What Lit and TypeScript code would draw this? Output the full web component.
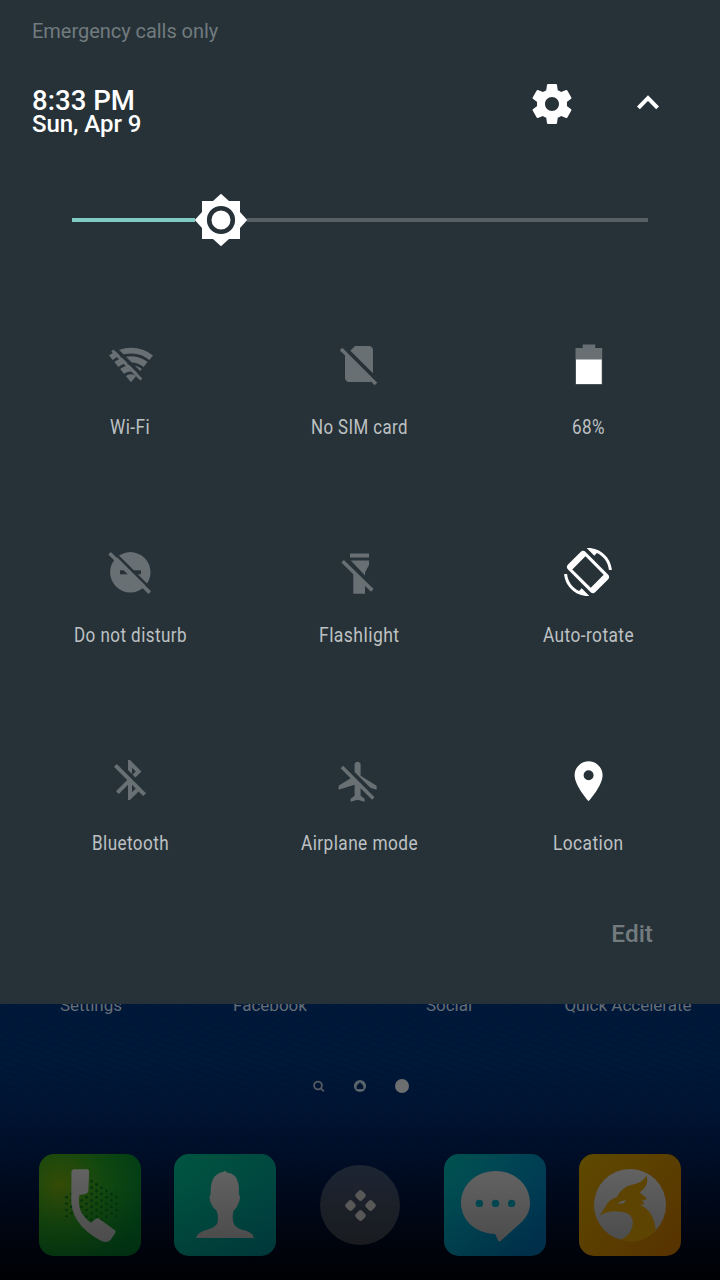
import { LitElement, html, css, svg } from "lit";
import { customElement, property } from "lit/decorators.js";

const icons: Record<string, unknown> = {
  wifi: svg`
    <defs><mask id="wm" maskUnits="userSpaceOnUse" x="0" y="0" width="52" height="48">
      <rect width="52" height="48" fill="#fff"/>
      <g fill="none" stroke="#000" stroke-width="2.8"><circle cx="25" cy="42.3" r="9.5"/><circle cx="25" cy="42.3" r="18.5"/><circle cx="25" cy="42.3" r="27.5"/></g>
      <path d="M6 5.2L40 39.2" stroke="#000" stroke-width="3.6"/>
    </mask></defs>
    <path mask="url(#wm)" d="M25 42.3L3 15.6Q12.5 7.8 25 7.8T47 15.6Z"/>
    <path d="M5.3 11.4L7.3 9.4L36.3 38.4L34.3 40.4Z"/>`,
  sim: svg`<path transform="scale(2)" d="M18.99 5c0-1.1-.89-2-1.99-2h-7L7.66 5.34 19 16.68 18.99 5zM3.65 3.88L2.38 5.15 5 7.77V19c0 1.1.9 2 2 2h10.01c.35 0 .67-.1.96-.26l1.88 1.88 1.27-1.27L3.65 3.88z"/>`,
  battery: svg`<path fill="#697074" d="M11.5 8H18.7V4.4H31.2V8H38.2V44.5H11.5Z"/><path d="M12 19.5H37.7V44H12Z"/>`,
  dnd: svg`
    <defs><mask id="dm" maskUnits="userSpaceOnUse" x="0" y="0" width="48" height="48">
      <rect width="48" height="48" fill="#fff"/><path d="M14 22.3H35V26.3H14Z" fill="#000"/>
      <path d="M4 0.8L48 44.8" stroke="#000" stroke-width="3.2"/>
      <path d="M7 8.3L40 41.3" stroke="#fff" stroke-width="4.6"/>
    </mask></defs>
    <g mask="url(#dm)"><circle cx="24.3" cy="24.3" r="20.2"/></g>
    <path d="M2.3 6.6L4.8 4.1L45 43.3L42.5 46Z"/>`,
  flash: svg`
    <path d="M15 5.6H34V9.4H15ZM15.8 12.6H34V17L30 24.4V27.4ZM18.3 25L30 36.5V45.7H18.3Z"/>
    <path d="M6.4 14.4L8.9 11.9L38.6 41.1L36 43.7Z"/>`,
  rotate: svg`<path transform="scale(2)" d="M16.48 2.52c3.27 1.55 5.61 4.72 5.97 8.48h1.5C23.44 4.84 18.29 0 12 0l-.66.03 3.81 3.81 1.33-1.32zm-8.96 18.96C4.25 19.94 1.91 16.76 1.55 13H.05C.56 19.16 5.71 24 12 24l.66-.03-3.81-3.81-1.33 1.32z"/>
    <path fill-rule="evenodd" d="M21.6 4Q19.1 1.6 16.6 4L4 16.6Q1.6 19.1 4 21.6L26.4 44Q28.9 46.4 31.4 44L44 31.4Q46.4 28.9 44 26.4ZM21.4 8.3L39.7 26.8L26.8 39.7L8.3 21.4Z"/>`,
  bluetooth: svg`<path transform="scale(2)" d="M13 5.83l1.88 1.88-1.6 1.6 1.41 1.41 3.02-3.02L12 2h-1v5.03l2 2v-3.2zM5.41 4L4 5.41 10.59 12 5 17.59 6.41 19 11 14.41V22h1l4.29-4.29 2.3 2.29L20 18.59 5.41 4zM13 18.17v-3.76l1.88 1.88L13 18.17z"/>`,
  airplane: svg`<path transform="translate(-.4 1.7) scale(2)" d="M13 9V3.5c0-.83-.67-1.5-1.5-1.5S10 2.67 10 3.5v3.68l7.83 7.83L21 16v-2l-8-5zM3 5.27l4.99 4.99L2 14v2l8-2.5V19l-2 1.5V22l3.5-1 3.5 1v-1.5L13 19v-3.73L18.73 21 20 19.73 4.27 4 3 5.27z"/>`,
  location: svg`<path fill-rule="evenodd" transform="translate(.6 1.3) scale(2)" d="M12 2C8.13 2 5 5.13 5 9c0 5.25 7 13 7 13s7-7.75 7-13c0-3.87-3.13-7-7-7zm0 9.5a2.5 2.5 0 0 1 0-5 2.5 2.5 0 0 1 0 5z"/>`,
};

@customElement("qs-tile")
class QsTile extends LitElement {
  @property() icon = "";
  @property() label = "";
  @property({ type: Boolean, reflect: true }) on = false;
  @property({ type: Number }) w = 100;

  static styles = css`
    :host { display: flex; flex-direction: column; align-items: center; height: 208px; color: #697074; }
    :host([on]) { color: #fff; }
    .glyph { display: block; width: 48px; height: 48px; margin-right: 1px; overflow: visible; fill: currentColor; }
    .label { display: block; height: 30px; margin: 24px 1px 0 0; overflow: visible; }
    text { font: 400 20px Roboto, sans-serif; letter-spacing: .5px; fill: #bec1c3; }
  `;

  render() {
    return html`
      <svg class="glyph" viewBox="0 0 48 48">${icons[this.icon]}</svg>
      <svg class="label" width=${this.w} height="30"><text x="0" y="22" textLength=${this.w} lengthAdjust="spacingAndGlyphs">${this.label}</text></svg>`;
  }
}

const tiles = [
  { icon: "wifi", label: "Wi-Fi", w: 40, on: false },
  { icon: "sim", label: "No SIM card", w: 97, on: false },
  { icon: "battery", label: "68%", w: 33, on: true },
  { icon: "dnd", label: "Do not disturb", w: 113, on: false },
  { icon: "flash", label: "Flashlight", w: 80.5, on: false },
  { icon: "rotate", label: "Auto-rotate", w: 91, on: true },
  { icon: "bluetooth", label: "Bluetooth", w: 77, on: false },
  { icon: "airplane", label: "Airplane mode", w: 117, on: false },
  { icon: "location", label: "Location", w: 70.5, on: true },
];

@customElement("app-root")
class AppRoot extends LitElement {
  static styles = css`
    :host { display: flex; flex-direction: column; width: 720px; height: 1280px; overflow: hidden; font-family: Roboto, sans-serif; background: #000; }
    svg { display: block; }
    .panel { flex: none; box-sizing: border-box; height: 1004px; background: #263238; position: relative; z-index: 1; color: #fff; }
    .carrier { padding: 19px 32px 0; font-size: 20px; line-height: 24px; letter-spacing: -.04px; color: #727b7e; }
    .header { display: flex; height: 96px; padding: 0 48px 0 32px; margin-top: 13px; }
    .clock { flex: 1; padding-top: 32px; font-weight: 500; white-space: nowrap; }
    .time { font-size: 27.6px; line-height: 25px; }
    .date { font-size: 24px; line-height: 22px; letter-spacing: -.05px; }
    .actions { display: flex; gap: 48px; padding-top: 24px; }
    .actions svg { fill: #fff; }
    .slider { display: flex; align-items: center; height: 54px; margin: 41px 72px 0; }
    .filled { width: 123px; height: 4px; background: #80cbc4; }
    .rest { flex: 1; height: 4px; background: #576064; }
    .tiles { display: grid; grid-template-columns: repeat(3, 229px); padding: 93px 16px 0; }
    .edit { padding: 0 67px; margin-top: -44px; text-align: right; font-size: 24.4px; line-height: 28px; font-weight: 500; color: #737b7f; }
    .home { flex: 1; background: linear-gradient(#001a3c 0, #001a3c00 0) , linear-gradient(transparent 25%, transparent 25%), repeating-linear-gradient(18deg, rgba(0,0,0,.07) 0 2px, transparent 2px 6px), linear-gradient(#00193b 0, #001839 22%, #001434 38%, #000d25 58%, #00040f 85%, #000103 100%); }
    .apps { display: grid; grid-template-columns: repeat(4, 179px); padding-left: 1.5px; margin-top: -9px; font-size: 17px; line-height: 20px; text-align: center; color: #666d74; white-space: nowrap; }
    .pages { display: flex; justify-content: center; margin-top: 63px; }
    .dock { display: grid; grid-template-columns: repeat(5, 135px); justify-content: center; align-items: center; justify-items: center; margin-top: 60px; }
    .app { width: 102px; height: 102px; }
  `;

  render() {
    return html`
      <div class="panel">
        <div class="carrier">Emergency calls only</div>
        <div class="header">
          <div class="clock"><div class="time">8:33 PM</div><div class="date">Sun, Apr 9</div></div>
          <div class="actions">
            <svg width="48" height="48" viewBox="0 0 24 24"><path d="M19.43 12.98c.04-.32.07-.64.07-.98s-.03-.66-.07-.98l2.11-1.65c.19-.15.24-.42.12-.64l-2-3.46c-.12-.22-.39-.3-.61-.22l-2.49 1c-.52-.4-1.08-.73-1.69-.98l-.38-2.65C14.46 2.18 14.25 2 14 2h-4c-.25 0-.46.18-.49.42l-.38 2.65c-.61.25-1.17.59-1.69.98l-2.49-1c-.23-.09-.49 0-.61.22l-2 3.46c-.13.22-.07.49.12.64l2.11 1.65c-.04.32-.07.65-.07.98s.03.66.07.98l-2.11 1.65c-.19.15-.24.42-.12.64l2 3.46c.12.22.39.3.61.22l2.49-1c.52.4 1.08.73 1.69.98l.38 2.65c.03.24.24.42.49.42h4c.25 0 .46-.18.49-.42l.38-2.65c.61-.25 1.17-.59 1.69-.98l2.49 1c.23.09.49 0 .61-.22l2-3.46c.12-.22.07-.49-.12-.64l-2.11-1.65zM12 15.5c-1.93 0-3.5-1.57-3.5-3.5s1.57-3.5 3.5-3.5 3.5 1.57 3.5 3.5-1.57 3.5-3.5 3.5z"/></svg>
            <svg width="48" height="48" viewBox="0 0 48 48"><path d="M14.4 27.8L24 18.2L33.6 27.8" fill="#263238" stroke="#fff" stroke-width="4"/></svg>
          </div>
        </div>
        <div class="slider">
          <div class="filled"></div>
          <svg width="52" height="54" viewBox="-26 -27 52 54"><path fill="#fff" d="M-19 -19H-8L0 -26.3L8 -19H19V-8L26.3 0L19 8V19H8L0 26.3L-8 19H-19V8L-26.3 0L-19 -8Z"/><circle r="11.8" fill="none" stroke="#263238" stroke-width="4.6"/></svg>
          <div class="rest"></div>
        </div>
        <div class="tiles">${tiles.map((t) => html`<qs-tile .icon=${t.icon} .label=${t.label} .w=${t.w} ?on=${t.on}></qs-tile>`)}</div>
        <div class="edit">Edit</div>
      </div>
      <div class="home">
        <div class="apps"><span>Settings</span><span>Facebook</span><span>Social</span><span>Quick Accelerate</span></div>
        <div class="pages">
          <svg width="104" height="16" viewBox="308 0 104 16">
            <g fill="none" stroke="#565b61" stroke-width="1.8"><circle cx="318" cy="7.5" r="3.9"/><path d="M320.8 10.3L323.8 13.3"/></g>
            <circle cx="360" cy="8" r="6.1" fill="#59646a"/>
            <path d="M360 4.2L363.3 7.8V11H356.7V7.8Z" fill="#001633"/>
            <circle cx="402" cy="8" r="7" fill="#6c6e70"/>
          </svg>
        </div>
        <div class="dock">
          <svg class="app" viewBox="0 0 102 102">
            <defs>
              <radialGradient id="g1" cx=".2" cy=".3" r=".85"><stop offset="0" stop-color="#344b06"/><stop offset=".5" stop-color="#12480f"/><stop offset="1" stop-color="#013d16"/></radialGradient>
              <linearGradient id="sh" x2="0" y2="1"><stop offset=".3" stop-color="#000" stop-opacity="0"/><stop offset="1" stop-color="#000" stop-opacity=".22"/></linearGradient>
              <linearGradient id="gr" x2="0" y2="1"><stop offset="0" stop-color="#626262"/><stop offset="1" stop-color="#4c4c4c"/></linearGradient>
              <pattern id="dots" width="10" height="6.4" patternUnits="userSpaceOnUse"><g fill="#02300c"><circle cx="2.5" cy="1.6" r="1.4"/><circle cx="7.5" cy="4.8" r="1.4"/></g></pattern>
            </defs>
            <rect width="102" height="102" rx="15" fill="url(#g1)"/><rect width="102" height="102" rx="15" fill="url(#sh)"/>
            <path fill="url(#dots)" d="M26 40L52 25L80 39V62L52 70L26 63Z"/>
            <path fill="url(#gr)" d="M35 15.3H48Q50.2 15.3 50.1 18L49.4 36Q49.3 39.5 46 40L40.3 41.3Q39 50 41.5 56.5Q45 64 51.7 68.7L57 64.8Q58.8 63.7 60.5 65L75.5 76Q77.5 77.3 76 79.3L71.5 86Q68 89.5 62.5 87Q47 79 39.3 68Q31 56 32.3 40Q32.5 28 32.4 18Q32.5 15.4 35 15.3Z"/>
          </svg>
          <svg class="app" viewBox="0 0 102 102">
            <defs><linearGradient id="g2" x2="1" y2="1"><stop offset="0" stop-color="#005540"/><stop offset="1" stop-color="#003d40"/></linearGradient></defs>
            <rect width="102" height="102" rx="15" fill="url(#g2)"/><rect width="102" height="102" rx="15" fill="url(#sh)" opacity=".5"/>
            <path fill="url(#gr)" d="M49 18Q51 16 53 18.5Q62 19 64.5 30Q65.3 35 64.8 40Q67 43 65 48Q63.5 53 59.5 57Q58 62 59 67Q60 73 67 75.5Q79 77.5 80 84H22Q23 78 34 75.5Q43 73 44 67Q44.5 61 42.5 56.5Q38 53 36.5 48Q34.5 43 36.6 40Q36 20 49 18Z"/>
          </svg>
          <svg width="80" height="80" viewBox="-40 -40 80 80">
            <defs><linearGradient id="g3" x2="0" y2="1"><stop offset="0" stop-color="#1d2534"/><stop offset="1" stop-color="#191b1e"/></linearGradient></defs>
            <circle r="40" fill="url(#g3)"/>
            <g fill="#585858" transform="translate(.5 .5) rotate(45)"><rect x="-11.6" y="-11.6" width="9" height="9" rx="2.6"/><rect x="2.6" y="-11.6" width="9" height="9" rx="2.6"/><rect x="-11.6" y="2.6" width="9" height="9" rx="2.6"/><rect x="2.6" y="2.6" width="9" height="9" rx="2.6"/></g>
          </svg>
          <svg class="app" viewBox="0 0 102 102">
            <defs><linearGradient id="g4" x2="1" y2=".7"><stop offset="0" stop-color="#00524e"/><stop offset=".5" stop-color="#004454"/><stop offset="1" stop-color="#003452"/></linearGradient></defs>
            <rect width="102" height="102" rx="15" fill="url(#g4)"/><rect width="102" height="102" rx="15" fill="url(#sh)" opacity=".5"/>
            <path fill="url(#gr)" d="M51.5 17C71 17 86 31 86 49C86 58 82 64 76 69.5L56.5 87Q54.8 88.5 53.8 86L51.5 80.5Q50.8 80 49 79.8C30 78.5 17 65 17 49C17 31 32 17 51.5 17Z"/>
            <g fill="#004650"><circle cx="35.4" cy="49.4" r="3.7"/><circle cx="51.5" cy="49.4" r="3.7"/><circle cx="67.6" cy="49.4" r="3.7"/></g>
          </svg>
          <svg class="app" viewBox="0 0 102 102">
            <defs><linearGradient id="g5" x2="1" y2="1"><stop offset="0" stop-color="#5e4a00"/><stop offset="1" stop-color="#573200"/></linearGradient></defs>
            <rect width="102" height="102" rx="15" fill="url(#g5)"/>
            <circle cx="51" cy="51" r="36" fill="url(#gr)"/>
            <path fill="#5e4403" d="M67.7 21.5Q70.5 32 60.5 38.5Q65 42 68 44.5Q66 46.5 63 46.5L65.5 50Q62 51 60.5 50.5Q75 57 76.7 76Q63 92 41.7 86Q55 79 53.7 66Q52 58 40 57.5Q29 56 21 61.7Q24 56 26.5 52.5Q29 46 38 43Q43 33 52 31Q63 29.5 67.7 21.5Z"/>
            <path fill="#5c5c5c" d="M39 49.5Q42 46 47 46.5Q45 50.5 39 49.5Z"/>
          </svg>
        </div>
      </div>`;
  }
}
